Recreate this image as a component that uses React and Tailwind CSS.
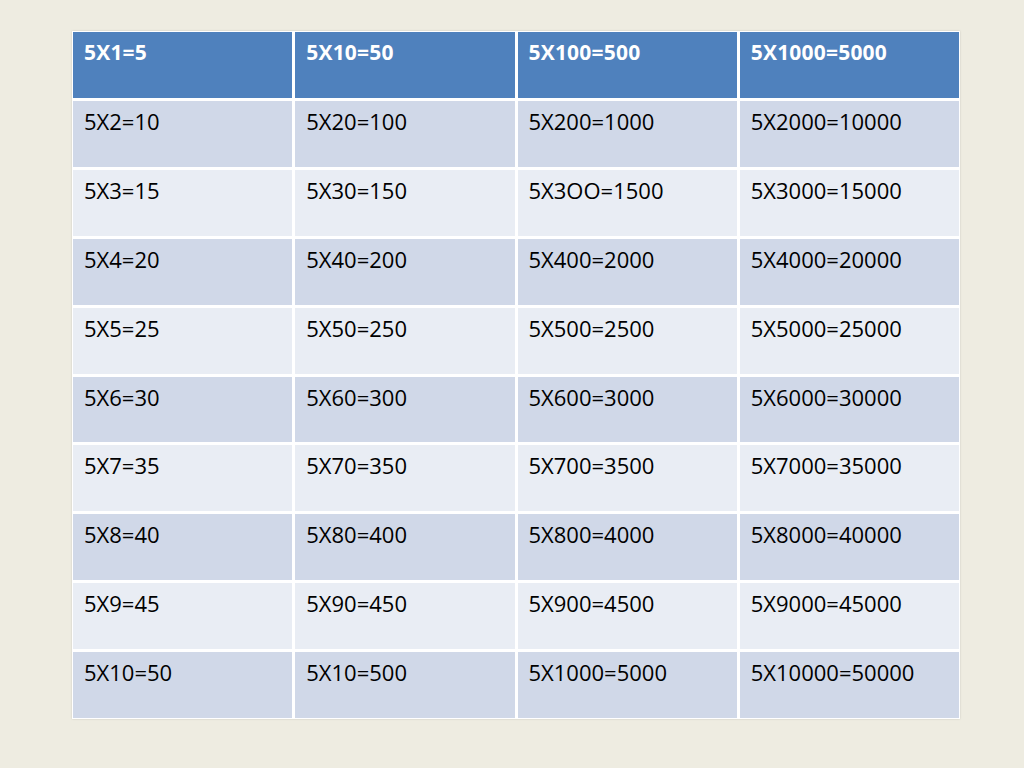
import React from 'react'

const rows = [
  ['5X1=5', '5X10=50', '5X100=500', '5X1000=5000'],
  ['5X2=10', '5X20=100', '5X200=1000', '5X2000=10000'],
  ['5X3=15', '5X30=150', '5X3OO=1500', '5X3000=15000'],
  ['5X4=20', '5X40=200', '5X400=2000', '5X4000=20000'],
  ['5X5=25', '5X50=250', '5X500=2500', '5X5000=25000'],
  ['5X6=30', '5X60=300', '5X600=3000', '5X6000=30000'],
  ['5X7=35', '5X70=350', '5X700=3500', '5X7000=35000'],
  ['5X8=40', '5X80=400', '5X800=4000', '5X8000=40000'],
  ['5X9=45', '5X90=450', '5X900=4500', '5X9000=45000'],
  ['5X10=50', '5X10=500', '5X1000=5000', '5X10000=50000'],
]

const App = () => {
  return (
    <div className="w-[1024px] h-[768px] bg-[#eeece1] pt-[31px] pl-[72px] font-['Open_Sans',sans-serif]">
      <div className="w-[888px] h-[688px] bg-white p-px grid grid-cols-4 grid-rows-10 gap-[3px] shadow-[0_0_2px_rgba(0,0,0,0.15)]">
        {rows.map((row, i) =>
          row.map((cell, j) => (
            <div
              key={i + '-' + j}
              className={
                i === 0
                  ? 'bg-[#4f81bd] text-white font-bold text-[21px] leading-7 pl-[11px] pt-[6px] tracking-[0.2px]'
                  : i % 2 === 1
                  ? 'bg-[#d0d8e8] text-black text-[22px] leading-7 pl-[11px] pt-[6px]'
                  : 'bg-[#e9edf4] text-black text-[22px] leading-7 pl-[11px] pt-[6px]'
              }
            >
              {cell}
            </div>
          ))
        )}
      </div>
    </div>
  )
}

export default App
